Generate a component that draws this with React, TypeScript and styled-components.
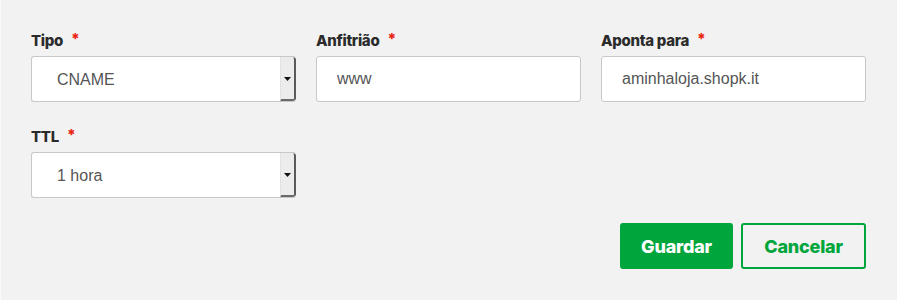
import styled, { createGlobalStyle } from "styled-components"

const GlobalStyle = createGlobalStyle`
    html, body {
        margin: 0;
        padding: 0;
        background: #f2f2f2;
    }
    * {
        box-sizing: border-box;
    }
`

type FieldType = {
    label: string
    value: string
    kind: 'select' | 'input'
}

const fields: FieldType[] = [
    { label: 'Tipo', value: 'CNAME', kind: 'select' },
    { label: 'Anfitrião', value: 'www', kind: 'input' },
    { label: 'Aponta para', value: 'aminhaloja.shopk.it', kind: 'input' },
    { label: 'TTL', value: '1 hora', kind: 'select' },
]

const Field = (props: FieldType) => {
    return (
        <StyledField>
            <StyledLabel>
                {props.label}
                <StyledRequired>*</StyledRequired>
            </StyledLabel>
            {props.kind === 'select' ? (
                <StyledSelectBox>
                    <StyledSelect defaultValue={props.value}>
                        <option>{props.value}</option>
                    </StyledSelect>
                    <StyledArrowButton>
                        <svg width="7" height="4" viewBox="0 0 7 4">
                            <path d="M0 0 H7 L3.5 4 Z" fill="#111" />
                        </svg>
                    </StyledArrowButton>
                </StyledSelectBox>
            ) : (
                <StyledInput defaultValue={props.value} />
            )}
        </StyledField>
    )
}

export default function App() {
    return (
        <>
            <GlobalStyle />
            <StyledPage>
                <StyledGrid>
                    {fields.map((f) => (
                        <Field key={f.label} {...f} />
                    ))}
                </StyledGrid>
                <StyledActions>
                    <StyledButton variant="primary">Guardar</StyledButton>
                    <StyledButton variant="outline">Cancelar</StyledButton>
                </StyledActions>
            </StyledPage>
        </>
    )
}

const StyledPage = styled.div`
    height: 300px;
    padding: 30px 31px 0 30px;
    background: #f2f2f2;
    border-left: 1px solid #fafafa;
    display: flex;
    flex-direction: column;
`

const StyledGrid = styled.div`
    display: grid;
    grid-template-columns: repeat(3, 1fr);
    column-gap: 20px;
    row-gap: 24px;
`

const StyledField = styled.div`
    display: flex;
    flex-direction: column;
`

const StyledLabel = styled.label`
    display: flex;
    align-items: center;
    height: 20px;
    margin-bottom: 6px;
    font-family: Inter, "Noto Sans", sans-serif;
    font-weight: 800;
    font-size: 15px;
    letter-spacing: -0.3px;
    color: #2b2b2b;
`

const StyledRequired = styled.span`
    color: #e8230f;
    margin-left: 8px;
    font-size: 15px;
    position: relative;
    top: -2px;
`

const StyledInput = styled.input`
    height: 46px;
    width: 100%;
    padding: 0 20px;
    border: 1px solid #c8c8c8;
    border-radius: 3px;
    background: #fff;
    font-family: "Liberation Sans", Arial, sans-serif;
    font-size: 16px;
    color: #555;
    outline: none;
`

const StyledSelectBox = styled.div`
    display: flex;
    height: 46px;
    border: 1px solid #c8c8c8;
    border-right: none;
    border-radius: 3px;
    background: #fff;
    overflow: hidden;
`

const StyledSelect = styled.select`
    flex: 1;
    appearance: none;
    border: none;
    background: transparent;
    padding: 0 25px;
    font-family: "Liberation Sans", Arial, sans-serif;
    font-size: 16px;
    color: #555;
    outline: none;
`

const StyledArrowButton = styled.div`
    width: 16px;
    display: flex;
    align-items: center;
    justify-content: center;
    background: #ececec;
    border-left: 1px solid #e2e2e2;
    border-right: 2px solid #5a5a5a;
    border-bottom: 2px solid #6a6a6a;
    border-radius: 0 3px 3px 0;
    padding-top: 1px;
`

const StyledActions = styled.div`
    display: flex;
    justify-content: flex-end;
    gap: 8px;
    margin-top: 25px;
`

const StyledButton = styled.button<{ variant: 'primary' | 'outline' }>`
    height: 46px;
    padding: 0 19px;
    border: 2px solid #00a63c;
    border-radius: 3px;
    background: ${(p) => (p.variant === 'primary' ? '#00a63c' : 'transparent')};
    color: ${(p) => (p.variant === 'primary' ? '#fff' : '#00a63c')};
    font-family: Inter, "Noto Sans", sans-serif;
    font-weight: 800;
    font-size: 18px;
    letter-spacing: -0.2px;
    cursor: pointer;
    min-width: ${(p) => (p.variant === 'primary' ? '113px' : '125px')};
`
